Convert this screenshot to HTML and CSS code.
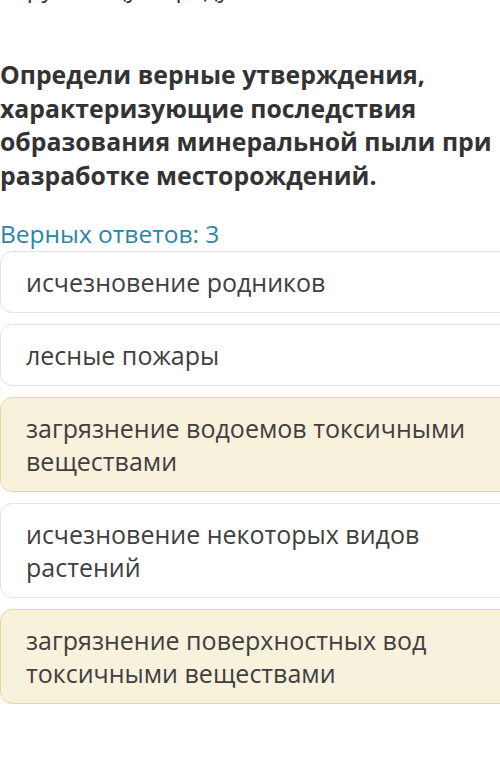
FILE: index.html
```html
<!DOCTYPE html>
<html lang="ru">
<head>
<meta charset="utf-8">
<link rel="stylesheet" href="styles.css">
</head>
<body>
<div class="page">
  <p class="prev">окружающую среду</p>
  <h1 class="question">Определи верные утверждения, характеризующие последствия образования минеральной пыли при разработке месторождений.</h1>
  <p class="count">Верных ответов: 3</p>
  <ul class="options">
    <li class="option">исчезновение родников</li>
    <li class="option">лесные пожары</li>
    <li class="option selected">загрязнение водоемов токсичными веществами</li>
    <li class="option">исчезновение некоторых видов растений</li>
    <li class="option selected">загрязнение поверхностных вод токсичными веществами</li>
  </ul>
</div>
</body>
</html>
```
FILE: styles.css
```css
html, body {
  margin: 0;
  padding: 0;
  background: #ffffff;
  overflow: hidden;
}
.page {
  width: 500px;
  height: 780px;
  overflow: hidden;
  font-family: "Open Sans", "Noto Sans", sans-serif;
  color: #3a3a3a;
}
.prev {
  margin: -27px 0 0 0;
  font-size: 24px;
  line-height: 30px;
  color: #333;
  white-space: nowrap;
}
.question {
  margin: 55px 0 0 0;
  font-size: 24.8px;
  line-height: 33.5px;
  font-weight: 700;
  color: #333333;
}
.count {
  margin: 27px 0 2px 0;
  font-size: 24.5px;
  line-height: 30px;
  color: #2b86a6;
}
.options {
  list-style: none;
  margin: 0;
  padding: 0;
  width: 520px;
  display: flex;
  flex-direction: column;
  gap: 11px;
}
.option {
  border: 1px solid #dfe4e3;
  border-radius: 12px;
  background: #ffffff;
  padding: 13.5px 40px 13.5px 25px;
  font-size: 25px;
  line-height: 33px;
  color: #404040;
}
.option.selected {
  background: #f8f1dc;
  border-color: #e6d7a4;
}
```
